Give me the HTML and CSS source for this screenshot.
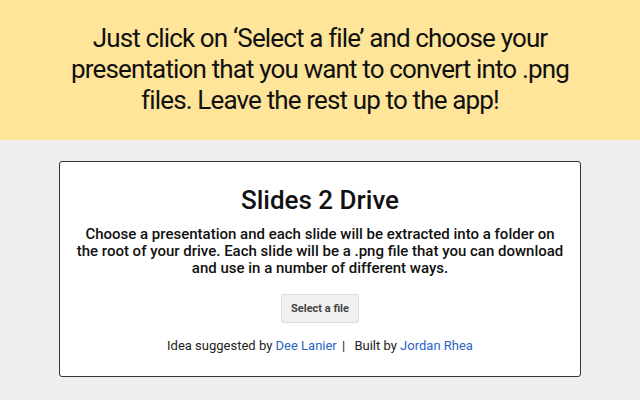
FILE: index.html
```html
<!DOCTYPE html>
<html lang="en">
<head>
    <meta charset="UTF-8">
    <meta name="viewport" content="width=device-width, initial-scale=1.0">
    <title>Slides 2 Drive</title>
    <link rel="stylesheet" href="styles.css">
</head>
<body>
    <div class="banner">
        <p class="banner-text">Just click on ‘Select a file’ and choose your presentation that you want to convert into .png files. Leave the rest up to the app!</p>
    </div>

    <div class="card">
        <h1>Slides 2 Drive</h1>
        <p class="intro">Choose a presentation and each slide will be extracted into a folder on the root of your drive. Each slide will be a .png file that you can download and use in a number of different ways.</p>
        <button type="button" class="pick">Select a file</button>
        <p class="credits">Idea suggested by <a href="#">Dee Lanier</a> <span class="sep">|</span> Built by <a href="#">Jordan Rhea</a></p>
    </div>
</body>
</html>
```

FILE: styles.css
```css
body {
    font-family: Roboto, "Liberation Sans", sans-serif;
    background-color: #eeeeee;
    margin: 0;
    padding: 0;
}

.banner {
    background: #fee599;
    height: 140px;
    box-sizing: border-box;
    padding-top: 23px;
}

.banner-text {
    margin: 0 auto;
    width: 514px;
    text-align: center;
    font-size: 26px;
    line-height: 31px;
    color: #111;
    letter-spacing: -0.85px;
}

.card {
    background: #fff;
    border: 1px solid #333;
    border-radius: 3px;
    width: 520px;
    height: 214px;
    margin: 21px 0 0 59px;
    text-align: center;
}

h1 {
    font-size: 26px;
    font-weight: 500;
    color: #111;
    margin: 22px 0 10px;
    line-height: 32px;
}

.intro {
    font-size: 15px;
    font-weight: 500;
    line-height: 17px;
    color: #111;
    max-width: 491px;
    margin: 0 auto;
}

.pick {
    margin-top: 17px;
    background: #f1f1f1;
    border: 1px solid #dcdcdc;
    border-radius: 2px;
    color: #444;
    font-family: Roboto, "Liberation Sans", sans-serif;
    font-size: 11px;
    font-weight: 700;
    height: 29px;
    padding: 0 9px;
    cursor: pointer;
}

.credits {
    font-size: 13px;
    color: #222;
    margin: 15px 0 0;
}

.credits a {
    color: #2a64c5;
    text-decoration: none;
}

.sep {
    margin: 0 6px 0 2px;
}
```
